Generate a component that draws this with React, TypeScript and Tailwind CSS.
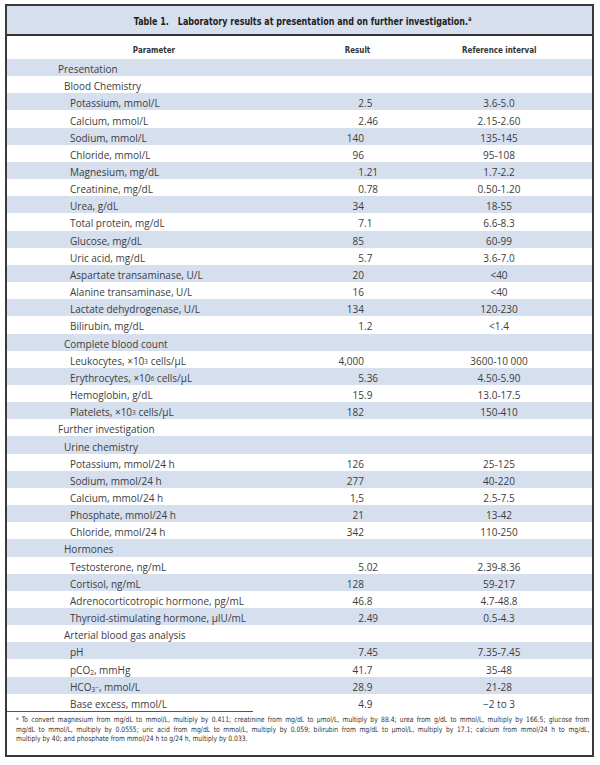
import React from 'react'

type Row = {
	label: React.ReactNode
	level: 0 | 1 | 2
	result?: string
	range?: string
}

const sup = (s: string) => <sup className="text-[6.5px] relative -top-[1px]">{s}</sup>
const sub = (s: string) => <sub className="text-[6.5px]">{s}</sub>

const rows: Row[] = [
	{ label: 'Presentation', level: 0 },
	{ label: 'Blood Chemistry', level: 1 },
	{ label: 'Potassium, mmol/L', level: 2, result: '2.5', range: '3.6-5.0' },
	{ label: 'Calcium, mmol/L', level: 2, result: '2.46', range: '2.15-2.60' },
	{ label: 'Sodium, mmol/L', level: 2, result: '140', range: '135-145' },
	{ label: 'Chloride, mmol/L', level: 2, result: '96', range: '95-108' },
	{ label: 'Magnesium, mg/dL', level: 2, result: '1.21', range: '1.7-2.2' },
	{ label: 'Creatinine, mg/dL', level: 2, result: '0.78', range: '0.50-1.20' },
	{ label: 'Urea, g/dL', level: 2, result: '34', range: '18-55' },
	{ label: 'Total protein, mg/dL', level: 2, result: '7.1', range: '6.6-8.3' },
	{ label: 'Glucose, mg/dL', level: 2, result: '85', range: '60-99' },
	{ label: 'Uric acid, mg/dL', level: 2, result: '5.7', range: '3.6-7.0' },
	{ label: 'Aspartate transaminase, U/L', level: 2, result: '20', range: '<40' },
	{ label: 'Alanine transaminase, U/L', level: 2, result: '16', range: '<40' },
	{ label: 'Lactate dehydrogenase, U/L', level: 2, result: '134', range: '120-230' },
	{ label: 'Bilirubin, mg/dL', level: 2, result: '1.2', range: '<1.4' },
	{ label: 'Complete blood count', level: 1 },
	{ label: <>Leukocytes, ×10{sup('3')} cells/µL</>, level: 2, result: '4,000', range: '3600-10 000' },
	{ label: <>Erythrocytes, ×10{sup('6')} cells/µL</>, level: 2, result: '5.36', range: '4.50-5.90' },
	{ label: 'Hemoglobin, g/dL', level: 2, result: '15.9', range: '13.0-17.5' },
	{ label: <>Platelets, ×10{sup('3')} cells/µL</>, level: 2, result: '182', range: '150-410' },
	{ label: 'Further investigation', level: 0 },
	{ label: 'Urine chemistry', level: 1 },
	{ label: 'Potassium, mmol/24 h', level: 2, result: '126', range: '25-125' },
	{ label: 'Sodium, mmol/24 h', level: 2, result: '277', range: '40-220' },
	{ label: 'Calcium, mmol/24 h', level: 2, result: '1,5', range: '2.5-7.5' },
	{ label: 'Phosphate, mmol/24 h', level: 2, result: '21', range: '13-42' },
	{ label: 'Chloride, mmol/24 h', level: 2, result: '342', range: '110-250' },
	{ label: 'Hormones', level: 1 },
	{ label: 'Testosterone, ng/mL', level: 2, result: '5.02', range: '2.39-8.36' },
	{ label: 'Cortisol, ng/mL', level: 2, result: '128', range: '59-217' },
	{ label: 'Adrenocorticotropic hormone, pg/mL', level: 2, result: '46.8', range: '4.7-48.8' },
	{ label: 'Thyroid-stimulating hormone, µIU/mL', level: 2, result: '2.49', range: '0.5-4.3' },
	{ label: 'Arterial blood gas analysis', level: 1 },
	{ label: 'pH', level: 2, result: '7.45', range: '7.35-7.45' },
	{ label: <>pCO{sub('2')}, mmHg</>, level: 2, result: '41.7', range: '35-48' },
	{ label: <>HCO{sub('3')}{sup('−')}, mmol/L</>, level: 2, result: '28.9', range: '21-28' },
	{ label: 'Base excess, mmol/L', level: 2, result: '4.9', range: '−2 to 3' },
]

const indent = ['pl-[51px]', 'pl-[57px]', 'pl-[63px]']

// numbers line up on the decimal point, integers end where the point would be
const Result = ({ value }: { value?: string }) => {
	if (!value) return <div />
	const dot = value.indexOf('.')
	const whole = dot === -1 ? value : value.slice(0, dot)
	const frac = dot === -1 ? '' : value.slice(dot)
	return (
		<div className="flex">
			<span className="w-[76px] text-right">{whole}</span>
			<span>{frac}</span>
		</div>
	)
}

const cond = "font-['DejaVu_Sans_Condensed','Liberation_Sans',sans-serif]"

export default function App() {
	return (
		<div className="bg-white w-[600px] h-[765px] pt-[4px] pl-[5px]">
			<div className="w-[589px] border-2 border-[#3a3a3a] flex flex-col text-[#3d3d3d] font-['Open_Sans',sans-serif]">
				<div className={`h-[30px] pt-[4px] bg-[#d6dfee] border-b-2 border-[#333] flex items-center justify-center text-[11px] font-bold text-[#222] ${cond}`}>
					<div className="whitespace-nowrap scale-x-[0.81] pl-[8px]">
						<span>Table 1.</span>
						<span className="ml-[11px]">Laboratory results at presentation and on further investigation.</span>
						<sup className="text-[6.5px] -top-[4px]">a</sup>
					</div>
				</div>
				<div className={`h-[23px] pt-[6px] grid grid-cols-[281px_138px_146px] items-center text-[9px] font-bold text-[#333] ${cond}`}>
					<div className="text-center pl-[13px]">
						<span className="inline-block scale-x-[0.88]">Parameter</span>
					</div>
					<div className="text-center">
						<span className="inline-block scale-x-[0.88]">Result</span>
					</div>
					<div className="text-center">
						<span className="inline-block scale-x-[0.88] whitespace-nowrap">Reference interval</span>
					</div>
				</div>
				{rows.map((r, i) => (
					<div
						key={i}
						className={`h-[17.16px] pt-[3px] grid grid-cols-[281px_138px_146px] items-center text-[10px] leading-none ${i % 2 === 0 ? 'bg-[#d6dfee]' : 'bg-white'}`}
					>
						<div className={`${indent[r.level]} whitespace-nowrap`}>{r.label}</div>
						<Result value={r.result} />
						<div className="text-center whitespace-nowrap">{r.range ?? ''}</div>
					</div>
				))}
				<div className="h-[44px] flex flex-col overflow-hidden">
					<div className="w-[246px] h-[1.5px] bg-[#555]" />
					<div className="pl-[9px] pt-[3px]">
						<div className={`w-[630px] origin-left scale-x-[0.91] text-[7.4px] leading-[9.5px] text-[#333] ${cond}`}>
							<div className="whitespace-nowrap [text-align-last:justify] text-justify">
								<sup className="text-[5px]">a</sup> To convert magnesium from mg/dL to mmol/L, multiply by 0.411; creatinine from mg/dL to µmol/L, multiply by 88.4; urea from g/dL to mmol/L, multiply by 166.5; glucose from
							</div>
							<div className="whitespace-nowrap [text-align-last:justify] text-justify">
								mg/dL to mmol/L, multiply by 0.0555; uric acid from mg/dL to mmol/L, multiply by 0.059; bilirubin from mg/dL to µmol/L, multiply by 17.1; calcium from mmol/24 h to mg/dL,
							</div>
							<div className="whitespace-nowrap">multiply by 40; and phosphate from mmol/24 h to g/24 h, multiply by 0.033.</div>
						</div>
					</div>
				</div>
			</div>
		</div>
	)
}
